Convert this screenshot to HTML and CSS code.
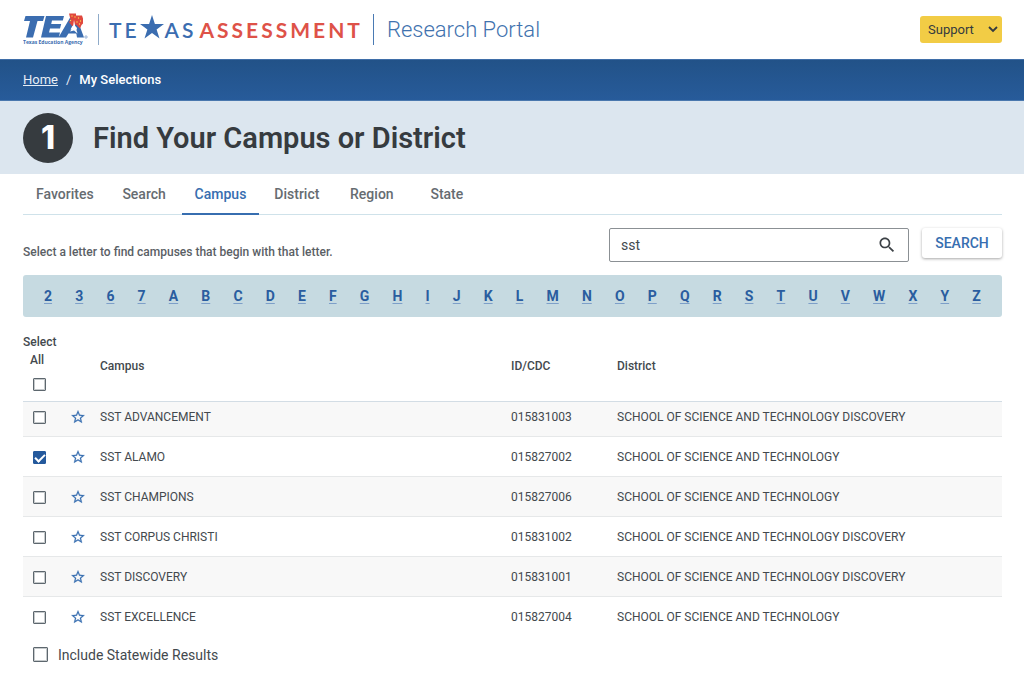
FILE: index.html
```html
<!DOCTYPE html>
<html lang="en">
<head>
<meta charset="utf-8">
<meta name="viewport" content="width=device-width, initial-scale=1">
<title>Research Portal - My Selections</title>
<link rel="stylesheet" href="styles.css">
</head>
<body>
<svg class="defs" aria-hidden="true">
  <symbol id="star" viewBox="0 0 24 24"><path d="M22 9.24l-7.19-.62L12 2 9.19 8.63 2 9.24l5.46 4.73L5.82 21 12 17.27 18.18 21l-1.63-7.03L22 9.24zM12 15.4l-3.76 2.27 1-4.28-3.32-2.88 4.38-.38L12 6.1l1.71 4.04 4.38.38-3.32 2.88 1 4.28L12 15.4z"/></symbol>
</svg>
<header class="masthead">
  <div class="brand">
    <svg class="tea" viewBox="0 0 66 34" role="img" aria-label="Texas Education Agency">
      <g fill="#3b6db0">
        <path d="M2.500 3h19l-1.500 5h-5.500l-4.500 16.500h-7L7 8H1z"/>
        <path d="M23 3h18l-1.200 4.500H29l-.8 3.500h10l-1.200 4.500H27l-1 4h11l-1.300 5H18z"/>
        <path d="M48 3h5l8 21.500h-7l-.7-4H45.500l-2.500 4h-7.500zM51 10l-3.500 6.500h4.700z"/>
      </g>
      <path fill="#e0483e" d="M46 .5h7V2.500h6l1 3v5l-1.500 1.500-1.500 3.500-4-4-4 1.500-3.500-4.500h2.500z"/>
      <path fill="#fff" d="M51 7l1.200 6 1.800 2-.5 2 1 3.500-3.500-3-4 1 3-4.500z"/>
      <g fill="#ffd34d"><circle cx="49" cy="3" r=".7"/><circle cx="52" cy="4" r=".7"/><circle cx="55.500" cy="5" r=".7"/><circle cx="57.500" cy="8" r=".7"/><circle cx="56.500" cy="11" r=".7"/><circle cx="47.500" cy="7.500" r=".7"/><circle cx="54" cy="9" r=".7"/></g>
      <circle cx="63" cy="24" r="1.200" fill="none" stroke="#3b6db0" stroke-width=".5"/>
      <text class="tea-name" x="0" y="30.500">Texas Education Agency</text>
    </svg>
    <span class="rule"></span>
    <div class="wordmark">
      <span>TE</span><svg class="lone-star" viewBox="0 0 24 24" aria-label="X"><path fill="#3b6db0" d="M12 0l2.900 8.900H24l-7.400 5.500L19.500 23.500 12 18l-7.500 5.500 2.900-9.100L0 8.900h9.100z"/></svg><span>AS</span><span class="red">ASSESSMENT</span>
    </div>
    <span class="rule dark"></span>
    <span class="portal">Research Portal</span>
  </div>
  <button class="support" type="button">Support
    <svg class="chevron" viewBox="0 0 10 7" aria-hidden="true"><path d="M1 1l4 4 4-4" fill="none" stroke="#343a3f" stroke-width="1.800"/></svg>
  </button>
</header>
<nav class="crumbs" aria-label="Breadcrumb"><a href="#">Home</a><span>/</span><span class="here">My Selections</span></nav>
<div class="banner"><span class="step">1</span><h1>Find Your Campus or District</h1></div>
<main>
  <nav class="tabs" aria-label="Views">
    <a href="#">Favorites</a><a href="#">Search</a><a class="active" href="#">Campus</a><a href="#">District</a><a href="#">Region</a><a href="#">State</a>
  </nav>
  <form class="finder">
    <p>Select a letter to find campuses that begin with that letter.</p>
    <div class="field">
      <input type="text" value="sst" aria-label="Search campuses">
      <svg class="glass" viewBox="0 0 24 24" aria-hidden="true"><path d="M15.500 14h-.79l-.28-.27C15.410 12.590 16 11.110 16 9.500 16 5.910 13.090 3 9.500 3S3 5.910 3 9.500 5.910 16 9.500 16c1.610 0 3.090-.59 4.230-1.570l.27.28v.79l5 4.990L20.490 19l-4.990-5zm-6 0C7.010 14 5 11.990 5 9.500S7.010 5 9.500 5 14 7.010 14 9.500 11.990 14 9.500 14z"/></svg>
    </div>
    <button class="go" type="button">SEARCH</button>
  </form>
  <nav class="letters" aria-label="Letters">
    <a href="#">2</a><a href="#">3</a><a href="#">6</a><a href="#">7</a><a href="#">A</a><a href="#">B</a><a href="#">C</a><a href="#">D</a><a href="#">E</a><a href="#">F</a><a href="#">G</a><a href="#">H</a><a href="#">I</a><a href="#">J</a><a href="#">K</a><a href="#">L</a><a href="#">M</a><a href="#">N</a><a href="#">O</a><a href="#">P</a><a href="#">Q</a><a href="#">R</a><a href="#">S</a><a href="#">T</a><a href="#">U</a><a href="#">V</a><a href="#">W</a><a href="#">X</a><a href="#">Y</a><a href="#">Z</a>
  </nav>
  <table>
    <colgroup><col class="c-check"><col class="c-star"><col class="c-campus"><col class="c-id"><col></colgroup>
    <thead><tr>
      <th class="all"><label for="all">Select<span>All</span></label><input type="checkbox" id="all"></th>
      <th></th><th>Campus</th><th>ID/CDC</th><th>District</th>
    </tr></thead>
    <tbody>
      <tr><td><input type="checkbox" aria-label="SST ADVANCEMENT"></td><td><svg class="fav"><use href="#star"/></svg></td><td>SST ADVANCEMENT</td><td>015831003</td><td>SCHOOL OF SCIENCE AND TECHNOLOGY DISCOVERY</td></tr>
      <tr><td><input type="checkbox" checked aria-label="SST ALAMO"></td><td><svg class="fav"><use href="#star"/></svg></td><td>SST ALAMO</td><td>015827002</td><td>SCHOOL OF SCIENCE AND TECHNOLOGY</td></tr>
      <tr><td><input type="checkbox" aria-label="SST CHAMPIONS"></td><td><svg class="fav"><use href="#star"/></svg></td><td>SST CHAMPIONS</td><td>015827006</td><td>SCHOOL OF SCIENCE AND TECHNOLOGY</td></tr>
      <tr><td><input type="checkbox" aria-label="SST CORPUS CHRISTI"></td><td><svg class="fav"><use href="#star"/></svg></td><td>SST CORPUS CHRISTI</td><td>015831002</td><td>SCHOOL OF SCIENCE AND TECHNOLOGY DISCOVERY</td></tr>
      <tr><td><input type="checkbox" aria-label="SST DISCOVERY"></td><td><svg class="fav"><use href="#star"/></svg></td><td>SST DISCOVERY</td><td>015831001</td><td>SCHOOL OF SCIENCE AND TECHNOLOGY DISCOVERY</td></tr>
      <tr><td><input type="checkbox" aria-label="SST EXCELLENCE"></td><td><svg class="fav"><use href="#star"/></svg></td><td>SST EXCELLENCE</td><td>015827004</td><td>SCHOOL OF SCIENCE AND TECHNOLOGY</td></tr>
    </tbody>
  </table>
  <label class="statewide"><input type="checkbox">Include Statewide Results</label>
</main>
</body>
</html>
```

FILE: styles.css
```css
* { box-sizing: border-box; }
body { margin: 0; background: #fff; color: #43494e; font: 14px/20px Roboto, "Liberation Sans", sans-serif; }
a { color: inherit; }
.defs { position: absolute; width: 0; height: 0; }

.masthead { display: flex; align-items: center; justify-content: space-between; height: 59px; padding: 0 22px 0 23px; }
.brand { display: flex; align-items: center; }
.tea { width: 66px; height: 34px; }
.tea-name { font: 700 5px "Open Sans", sans-serif; fill: #3b6db0; }
.rule { width: 1px; height: 31px; margin: 0 10px 0 9px; background: #8fabc9; }
.rule.dark { margin: 0 13px 0 10px; background: #4a7ab3; }
.wordmark { display: flex; align-items: center; color: #3b6db0; font: 600 21px/30px Lato, sans-serif; letter-spacing: 3px; }
.wordmark .red { margin-left: 3px; color: #de5248; font-weight: 700; }
.lone-star { width: 24px; height: 24px; margin: -6px 1px 0 0; }
.portal { color: #3f72ae; font-size: 22px; line-height: 30px; font-weight: 300; }
.support { display: flex; align-items: center; justify-content: space-between; width: 82px; height: 27px; padding: 0 4px 0 8px; border: 0; border-radius: 3px; background: #f2cc45; color: #343a3f; font: 13px/20px Roboto, sans-serif; }
.chevron { width: 10px; height: 7px; }

.crumbs { display: flex; gap: 8px; align-items: center; height: 42px; padding: 0 23px; background: linear-gradient(#225288, #275b9a); border-top: 1px solid #3f6ea8; border-bottom: 1px solid #4a78ae; color: #e6edf5; font-size: 13px; }
.here { color: #fff; font-weight: 500; }

.banner { display: flex; align-items: center; gap: 20px; height: 73px; padding: 0 23px; background: #dce6ef; color: #363b3f; }
.step { display: flex; align-items: center; justify-content: center; width: 50px; height: 50px; border-radius: 50%; background: #363b3f; color: #fff; font: 800 32px/40px Inter, sans-serif; }
h1 { margin: 0; font-size: 29px; line-height: 36px; font-weight: 600; }

main { padding: 0 22px 0 23px; }
.tabs { display: flex; height: 41px; border-bottom: 1px solid #cfe2ea; font-weight: 500; color: #666c71; }
.tabs a { display: flex; align-items: center; justify-content: center; min-width: 75px; height: 41px; padding: 0 13px; border-bottom: 2px solid transparent; text-decoration: none; }
.tabs .active { color: #376eb0; border-color: #376eb0; }

.finder { display: flex; align-items: center; height: 60px; }
.finder p { flex: 1; margin: 14px 0 0; color: #5a6065; font-size: 12px; font-weight: 500; }
.field { display: flex; align-items: center; width: 300px; height: 34px; padding: 0 11px; border: 1px solid #8b9094; border-radius: 2px; }
.field input { flex: 1; min-width: 0; padding: 0; border: 0; outline: 0; background: none; color: #43494e; font: 14px/20px Roboto, sans-serif; }
.glass { width: 20px; height: 20px; fill: #3c4146; }
.go { width: 80px; height: 30px; margin: 0 0 4px 13px; padding: 0; border: 0; border-radius: 3px; background: #fff; box-shadow: 0 1px 3px rgba(0,0,0,.35); color: #376eb0; font: 500 14px/20px Roboto, sans-serif; }

.letters { display: flex; align-items: center; justify-content: space-between; height: 42px; padding: 0 21px; border-radius: 3px; background: #c6dae1; color: #2a5d9f; font-size: 14px; font-weight: 700; }
.letters a { text-decoration-color: #7d9fc8; text-decoration-thickness: 1px; text-underline-offset: 2px; }

table { width: 100%; border-collapse: collapse; table-layout: fixed; font-size: 12px; line-height: 18px; }
.c-check { width: 48px; }
.c-star { width: 29px; }
.c-campus { width: 411px; }
.c-id { width: 106px; }
th, td { padding: 0; text-align: left; }
th { height: 84px; padding-top: 14px; font-weight: 500; vertical-align: middle; }
.all { padding-top: 16px; vertical-align: top; }
.all label span { display: block; padding-left: 7px; }
td { height: 40px; padding-top: 2px; border-bottom: 1px solid #e6e8e9; }
thead tr { border-bottom: 1px solid #d3dde5; }
tbody tr:nth-child(odd) { background: #f8f8f8; }
tbody tr:first-child td { height: 35px; padding: 0 0 3px; }
tbody tr:last-child { background: none; }
tbody tr:last-child td { border: 0; }
input[type="checkbox"] { appearance: none; display: block; flex: none; width: 13px; height: 13px; margin: 0 0 0 10px; border: 1px solid #5d676e; border-radius: 1px; background: #fff; box-shadow: inset 0 0 0 1px rgba(93,103,110,.35); }
.all input[type="checkbox"] { margin-top: 9px; }
input[type="checkbox"]:checked { border-color: #24599c; background: #24599c; box-shadow: none; }
input[type="checkbox"]:checked::after { content: ""; display: block; width: 4px; height: 8px; margin: 0 auto; border: solid #fff; border-width: 0 2px 2px 0; transform: rotate(45deg); }
.fav { display: block; width: 16px; height: 16px; margin-left: -1px; fill: #376eb0; stroke: #376eb0; stroke-width: .3; }
.statewide { display: flex; align-items: center; gap: 10px; height: 37px; }
.statewide input[type="checkbox"] { width: 15px; height: 15px; }
```
